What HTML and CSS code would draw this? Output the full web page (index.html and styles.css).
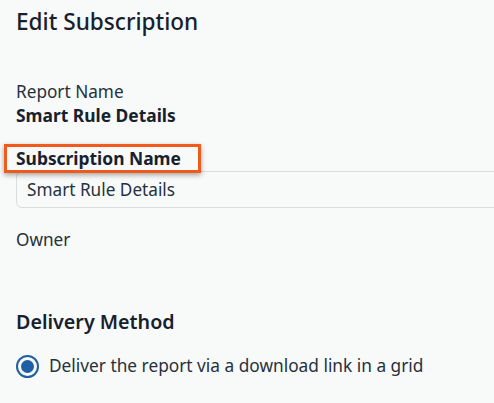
FILE: index.html
```html
<!DOCTYPE html>
<html>
<head>
<meta charset="utf-8">
<link rel="stylesheet" href="styles.css">
</head>
<body>
<div class="page">
  <h1 class="title">Edit Subscription</h1>
  <div class="field report">
    <div class="label">Report Name</div>
    <div class="value">Smart Rule Details</div>
  </div>
  <div class="field sub">
    <div class="label-bold"><span class="highlight">Subscription Name</span></div>
    <div class="input">Smart Rule Details</div>
  </div>
  <div class="field owner">
    <div class="label">Owner</div>
  </div>
  <h2 class="section">Delivery Method</h2>
  <div class="radio-row">
    <span class="radio"><span class="dot"></span></span>
    <span class="radio-label">Deliver the report via a download link in a grid</span>
  </div>
</div>
</body>
</html>
```
FILE: styles.css
```css
html, body {
  margin: 0;
  padding: 0;
  background: #f8f9f9;
}
body {
  font-family: "Noto Sans", "Open Sans", sans-serif;
  color: #1b2733;
  overflow: hidden;
}
.page {
  padding: 6px 0 0 16px;
}
.title {
  margin: 0;
  font-size: 22.6px;
  font-weight: 500;
  line-height: 32px;
  color: #17212d;
}
.report {
  margin-top: 42px;
}
.label {
  font-size: 17.2px;
  line-height: 24px;
  color: #26313c;
}
.value {
  font-size: 17.4px;
  font-weight: 700;
  line-height: 22px;
  color: #17212d;
}
.sub {
  margin-top: 20px;
}
.label-bold {
  font-size: 17.4px;
  font-weight: 700;
  line-height: 24px;
  color: #17212d;
}
.highlight {
  position: relative;
  display: inline-block;
}
.highlight::after {
  content: "";
  position: absolute;
  left: -12px;
  top: -2px;
  width: 191px;
  height: 23px;
  border: 3px solid #f25a1c;
  box-shadow: 0 2px 5px rgba(0, 0, 0, 0.35);
}
.input {
  margin-top: 1px;
  width: 500px;
  height: 37px;
  box-sizing: border-box;
  border: 1px solid #dadcdd;
  border-radius: 6px;
  padding: 0 10px;
  font-size: 17.2px;
  line-height: 35px;
  color: #26313c;
  background: #f8f9f9;
}
.owner {
  margin-top: 20px;
}
.section {
  margin: 56px 0 0 0;
  font-size: 19.7px;
  font-weight: 600;
  line-height: 28px;
  color: #17212d;
}
.radio-row {
  display: flex;
  align-items: center;
  margin-top: 18px;
  gap: 10px;
}
.radio {
  width: 23px;
  height: 23px;
  box-sizing: border-box;
  border: 2px solid #1f5fa6;
  border-radius: 50%;
  display: flex;
  align-items: center;
  justify-content: center;
}
.dot {
  width: 13px;
  height: 13px;
  border-radius: 50%;
  background: #1f5fa6;
}
.radio-label {
  font-size: 17.3px;
  line-height: 24px;
  color: #26313c;
}
```
